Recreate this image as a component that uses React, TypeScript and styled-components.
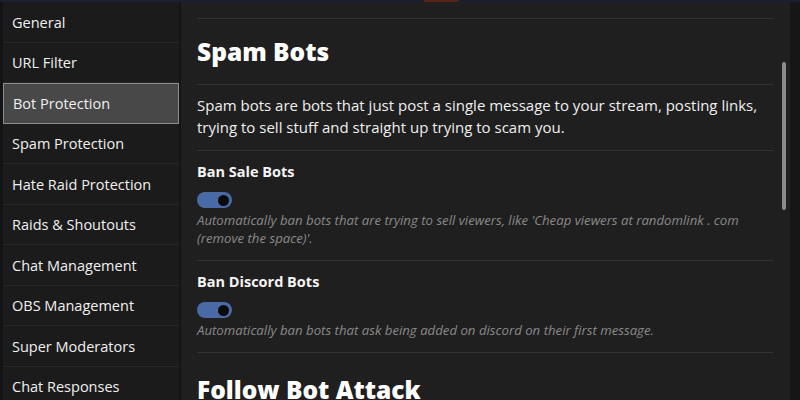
import styled, { createGlobalStyle } from "styled-components";

const GlobalStyle = createGlobalStyle`
  html, body {
    margin: 0;
    padding: 0;
    background: #141414;
  }
  body {
    font-family: "Open Sans", "Noto Sans", sans-serif;
    color: #f2f2f2;
  }
`;

const menuItems = [
  "General",
  "URL Filter",
  "Bot Protection",
  "Spam Protection",
  "Hate Raid Protection",
  "Raids & Shoutouts",
  "Chat Management",
  "OBS Management",
  "Super Moderators",
  "Chat Responses",
];

type Setting = {
  title: string;
  description: string;
};

const spamSettings: Setting[] = [
  {
    title: "Ban Sale Bots",
    description:
      "Automatically ban bots that are trying to sell viewers, like 'Cheap viewers at randomlink . com (remove the space)'.",
  },
  {
    title: "Ban Discord Bots",
    description:
      "Automatically ban bots that ask being added on discord on their first message.",
  },
];

function Toggle() {
  return (
    <ToggleTrack>
      <ToggleKnob />
    </ToggleTrack>
  );
}

function App() {
  return (
    <>
      <GlobalStyle />
      <Window>
        <TopStrip>
          <TopAccent />
        </TopStrip>

        <Body>
          <EdgeStrip />

          <Sidebar>
            {menuItems.map((item) => (
              <MenuItem key={item} $active={item === "Bot Protection"}>
                {item}
              </MenuItem>
            ))}
          </Sidebar>

          <Content>
            <Main>
              <SectionHead>
                <Heading>Spam Bots</Heading>
              </SectionHead>

              <Intro>
                Spam bots are bots that just post a single message to your
                stream, posting links, trying to sell stuff and straight up
                trying to scam you.
              </Intro>

              {spamSettings.map((setting) => (
                <SettingRow key={setting.title}>
                  <SettingTitle>{setting.title}</SettingTitle>
                  <Toggle />
                  <SettingHint>{setting.description}</SettingHint>
                </SettingRow>
              ))}

              <NextHead>
                <Heading>Follow Bot Attack</Heading>
              </NextHead>
            </Main>

            <ScrollTrack>
              <ScrollThumb />
            </ScrollTrack>
          </Content>

          <RightStrip />
        </Body>
      </Window>
    </>
  );
}

const Window = styled.div`
  width: 800px;
  height: 400px;
  display: flex;
  flex-direction: column;
  overflow: hidden;
  background: #1f1f1f;
`;

const TopStrip = styled.div`
  height: 2px;
  flex-shrink: 0;
  background: #1a2032;
  display: flex;
  padding-left: 424px;
`;

const TopAccent = styled.div`
  width: 34px;
  background: #5b2216;
`;

const Body = styled.div`
  flex: 1;
  display: flex;
  min-height: 0;
`;

const EdgeStrip = styled.div`
  width: 3px;
  flex-shrink: 0;
  background: #131317;
`;

const Sidebar = styled.nav`
  width: 176px;
  flex-shrink: 0;
  display: flex;
  flex-direction: column;
  background: #1b1b1b;
  border-right: 2px solid #151515;
`;

const MenuItem = styled.div<{ $active?: boolean }>`
  height: 40.5px;
  flex-shrink: 0;
  box-sizing: border-box;
  display: flex;
  align-items: center;
  padding: 1px 0 0 9px;
  font-size: 14.5px;
  color: #f0f0f0;
  background: ${(p) => (p.$active ? "#484848" : "transparent")};
  border: ${(p) => (p.$active ? "1px solid #8c8c8c" : "none")};
  border-bottom: ${(p) =>
    p.$active ? "1px solid #8c8c8c" : "1px solid #262626"};
`;

const Content = styled.div`
  flex: 1;
  display: flex;
  min-width: 0;
  background: #1f1f1f;
`;

const Main = styled.div`
  flex: 1;
  padding: 16px 0 0 16px;
  min-width: 0;
`;

const SectionHead = styled.div`
  height: 67px;
  display: flex;
  align-items: center;
  border-top: 1px solid #333;
  border-bottom: 1px solid #333;
  box-sizing: border-box;
`;

const Heading = styled.h2`
  margin: 0;
  font-size: 24.5px;
  font-weight: 800;
  color: #ffffff;
`;

const Intro = styled.p`
  margin: 0;
  padding: 9px 0 12px;
  font-size: 15px;
  line-height: 22px;
  color: #efefef;
  border-bottom: 1px solid #333;
`;

const SettingRow = styled.div`
  display: flex;
  flex-direction: column;
  align-items: flex-start;
  padding: 11px 0 13px;
  border-bottom: 1px solid #333;
`;

const SettingTitle = styled.div`
  font-size: 14.5px;
  font-weight: 700;
  line-height: 20px;
  color: #f4f4f4;
`;

const ToggleTrack = styled.div`
  margin-top: 10px;
  width: 35px;
  height: 16px;
  border-radius: 8px;
  background: #4a6aa6;
  display: flex;
  align-items: center;
  justify-content: flex-end;
  padding-right: 3px;
  box-sizing: border-box;
`;

const ToggleKnob = styled.div`
  width: 11px;
  height: 11px;
  border-radius: 50%;
  background: #0a0a0a;
`;

const SettingHint = styled.div`
  margin-top: 3px;
  max-width: 550px;
  font-size: 13.2px;
  line-height: 18px;
  font-style: italic;
  color: #8a8a8a;
`;

const NextHead = styled.div`
  padding-top: 20px;
`;

const ScrollTrack = styled.div`
  width: 17px;
  flex-shrink: 0;
  display: flex;
  justify-content: center;
  padding-left: 4px;
  box-sizing: border-box;
`;

const ScrollThumb = styled.div`
  margin-top: 60px;
  width: 4px;
  height: 148px;
  border-radius: 2px;
  background: #8a8a8a;
`;

const RightStrip = styled.div`
  width: 10px;
  flex-shrink: 0;
  background: #161616;
`;

export default App;
